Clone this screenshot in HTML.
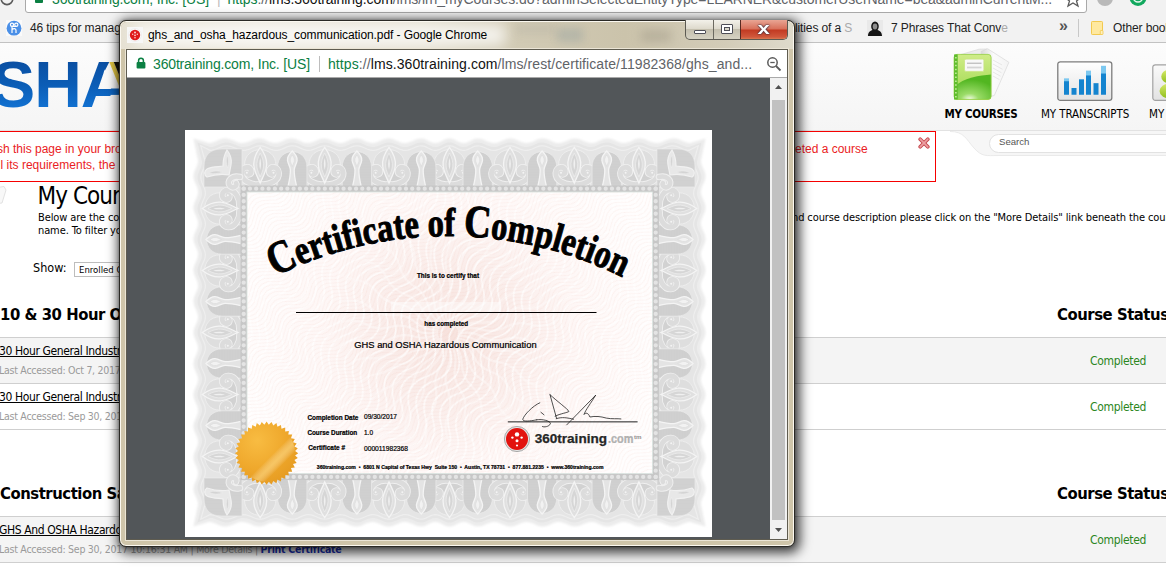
<!DOCTYPE html>
<html lang="en">
<head>
<meta charset="utf-8">
<title>ghs_and_osha_hazardous_communication.pdf - Google Chrome</title>
<style>
*{box-sizing:border-box;margin:0;padding:0}
html,body{width:1166px;height:575px;overflow:hidden;background:#fff}
body{position:relative;font-family:"DejaVu Sans Condensed","DejaVu Sans","Liberation Sans",sans-serif;color:#000}
.abs{position:absolute;white-space:nowrap}
.ui{font-family:"Liberation Sans",sans-serif}
/* ---------- background chrome ---------- */
#tb{left:0;top:0;width:1166px;height:13px;background:#f2f2f2}
#omni{left:25px;top:-18px;width:1062px;height:31px;background:#fff;border:1px solid #a9a9a9;border-radius:3px}
#bm{left:0;top:13px;width:1166px;height:30px;background:#f2f2f2;border-bottom:1px solid #c2c2c2}
.bmt{top:20px;font:12px/16px "Liberation Sans",sans-serif;color:#222;letter-spacing:-.12px}
/* ---------- LMS page ---------- */
#hdr{left:0;top:43px;width:1166px;height:88px;background:linear-gradient(#fcfcfc,#f5f5f5)}
.tah{font-family:"DejaVu Sans Condensed","DejaVu Sans",sans-serif}
.row{left:0;width:1166px;height:46px;border-top:1px solid #cfcfcf}
.lnk{left:-1px;font-size:12px;line-height:14px;letter-spacing:-.38px;text-decoration:underline;color:#000}
.la{left:-1px;font-size:10.5px;line-height:13px;letter-spacing:-.26px;color:#9a9a9a}
.cmp{left:1090px;font-size:12px;line-height:14px;letter-spacing:-.32px;color:#2b861d;margin-top:1px}
.sec{font-size:16.5px;line-height:20px;letter-spacing:-.45px;font-family:"DejaVu Sans Condensed","DejaVu Sans",sans-serif;font-weight:bold}
/* ---------- popup window ---------- */
#win{left:119px;top:20px;width:676px;height:527px;border-radius:7px;background:#cfc5aa;border:1px solid #2a2925;
 box-shadow:inset 0 0 0 1px #fbf8f0, 2px 3px 12px 3px rgba(0,0,0,.75), 0 0 3px 0 rgba(0,0,0,.3)}
#tbar{left:1px;top:1px;width:672px;height:27px;border-radius:6px 6px 0 0;overflow:hidden;background:linear-gradient(90deg,#e6e1d3 0,#ece8de 20%,#e4dfd0 45%,#d2cbb5 58%,#cbc3ab 75%,#d3ccb8 90%,#dedacb 100%)}
#inner{left:6px;top:28px;width:662px;height:491px;border:1px solid #5f5c50;box-shadow:0 0 0 1px #ebe5d6;background:#fff}
#addr{left:0;top:0;width:660px;height:28px;background:#fff;border-bottom:1px solid #a9a9a9}
#view{left:0;top:28px;width:660px;height:461px;background:#525659;overflow:hidden}
#sb{right:0;top:0;width:17px;height:461px;background:#f1f1f1}
#thumb{left:2px;top:22px;width:13px;height:420px;background:#c1c1c1}
#page{left:58px;top:52px;width:527px;height:407px;background:#fff;overflow:hidden}
.seg{font-family:"Liberation Sans",sans-serif}
</style>
</head>
<body>
<!-- background browser toolbar -->
<div id="tb" class="abs"></div>
<svg class="abs" style="left:0;top:0" width="16" height="8" viewBox="0 0 16 8"><circle cx="7" cy="-1.200" r="5.800" fill="none" stroke="#5a5a5a" stroke-width="1.600"/></svg>
<div id="omni" class="abs"></div>
<div class="abs" style="left:35px;top:-6px;width:8px;height:9px;background:#0b8043;border-radius:0 0 1px 1px"></div>
<div class="abs seg" id="otxt" style="left:52px;top:-10px;font-size:14px;line-height:18px;color:#5f6368;letter-spacing:-.075px"><span style="color:#0b8043;letter-spacing:-.16px">360training.com, Inc. [US]</span><span style="color:#bbb;padding:0 7px 0 8px">|</span><span style="color:#0b8043">https</span>://<span style="color:#111">lms.360training.com</span>/lms/lrn_myCourses.do?adminSelectedEntityType=LEARNER&amp;customerUserName=bea&amp;adminCurrentM...</div>
<svg class="abs" style="left:1062px;top:0" width="104" height="10" viewBox="-6 0 104 10"><path d="M8,-6 L10,0 L16,0.500 L11.500,4 L13,9 L8,6 L3,9 L4.500,4 L0,0.500 L6,0 Z" transform="translate(-3 -3)" fill="none" stroke="#5a5a5a" stroke-width="1.300"/><circle cx="37" cy="-2" r="8" fill="#b9b9b9"/><circle cx="70" cy="-2.500" r="8.500" fill="#12a85e"/><circle cx="70" cy="-2.500" r="4.500" fill="none" stroke="#e8f6ee" stroke-width="1.500"/><rect x="92" y="-3" width="3" height="3" fill="#666"/></svg>
<div id="bm" class="abs"></div>
<svg class="abs" style="left:6px;top:20px" width="16" height="16" viewBox="0 0 16 16"><rect width="16" height="16" fill="#fafafa"/><circle cx="8" cy="8.200" r="7.400" fill="#4a8fe7"/><g fill="none" stroke="#fff" stroke-width="1.200"><circle cx="6" cy="4.800" r="1.600"/><circle cx="10.300" cy="4.800" r="1.600"/><path d="M6,6.500V13M6,9.500c1.500,-1.300 4,-1.300 4,0.800V13M6,6.500L10.300,6.400"/></g></svg>
<div class="abs bmt" style="left:30px">46 tips for manag</div>
<div class="abs bmt" style="left:795px">lities of a <span style="color:#aaa">S</span></div>
<svg class="abs" style="left:867px;top:20px" width="16" height="16" viewBox="0 0 16 16"><rect width="16" height="16" fill="#e9e9e9"/><path d="M1,16C1,11.500 4,10.500 5.500,10C3.500,8 3.500,2 8,1.500C12.500,2 12.500,8 10.500,10C12,10.500 15,11.500 15,16Z" fill="#151515"/><ellipse cx="8" cy="6.500" rx="2.300" ry="2.900" fill="#8d8d8d"/></svg>
<div class="abs bmt" style="left:891px">7 Phrases That Conv<span style="color:#aaa">e</span></div>
<div class="abs bmt" style="left:1059px;top:18px;font-size:16px;font-weight:bold;color:#555">»</div>
<div class="abs" style="left:1078px;top:19px;width:1px;height:18px;background:#c8c8c8"></div>
<svg class="abs" style="left:1091px;top:21px" width="13" height="14" viewBox="0 0 13 14"><rect x=".5" y=".5" width="11" height="13" rx=".8" fill="#ffe9a0" stroke="#f2c94f" stroke-width="1"/><rect x="9.300" y="9.500" width="2.700" height="4" rx=".6" fill="#fff0bd" stroke="#f2c94f" stroke-width=".8"/></svg>
<div class="abs bmt" style="left:1113px">Other bookmarks</div>

<!-- LMS page -->
<div id="hdr" class="abs"></div>
<div class="abs" style="left:0;top:130px;width:1166px;height:1px;background:#e2e2e2"></div>
<!-- OSHA logo -->
<div class="abs ui" id="logo" style="left:-59.400px;top:48px;font-size:64px;line-height:74px;font-weight:bold;letter-spacing:-1px;transform:scaleX(1.03);transform-origin:0 0;background:linear-gradient(#0a4fa2 18%,#0b5db6 50%,#1272d2 82%);-webkit-background-clip:text;background-clip:text;color:transparent">OSHA</div>
<svg class="abs" style="left:0;top:43px" width="140" height="88" viewBox="0 43 140 88"><defs><linearGradient id="hg" gradientUnits="userSpaceOnUse" x1="0" y1="43" x2="0" y2="131"><stop offset="0" stop-color="#fcfcfc"/><stop offset="1" stop-color="#f5f5f5"/></linearGradient></defs><polygon points="110.300,60 123,60 123,88.600 103,88.600 104.200,72" fill="url(#hg)"/><polygon points="110.500,94.900 123,94.900 123,112 110.500,112" fill="url(#hg)"/><polygon points="109.300,62 113.800,62 132.500,108 128,108" fill="#e2c644"/><polygon points="113.800,62 120,62 138.700,108 132.500,108" fill="#14120c"/></svg>
<!-- nav icons -->
<svg class="abs" style="left:950px;top:46px" width="64" height="58" viewBox="0 0 64 58">
 <defs>
  <linearGradient id="gb" x1="0" y1="0" x2="0" y2="1"><stop offset="0" stop-color="#cfec88"/><stop offset="1" stop-color="#9dd74b"/></linearGradient>
  <radialGradient id="gb2" cx=".42" cy="1" r=".8"><stop offset="0" stop-color="#f6fdea"/><stop offset=".3" stop-color="#9bdc68"/><stop offset="1" stop-color="#52b621"/></radialGradient>
  <linearGradient id="gp" x1="0" y1="0" x2="1" y2="0"><stop offset="0" stop-color="#d9d9d9"/><stop offset=".45" stop-color="#fbfbfb"/><stop offset="1" stop-color="#f3f3f3"/></linearGradient>
 </defs>
 <polygon points="11,8.500 29,3.200 37,3 41,9" fill="#ececec" stroke="#d4d4d4" stroke-width=".6"/>
 <polygon points="31,5.500 37.500,2.700 58.900,16.300 44.300,49.500 40,50.500" fill="url(#gp)" stroke="#d8d8d8" stroke-width=".7"/>
 <path d="M43,14l9,5M43,18l9.500,5.300M43,22l8.500,4.800M43,26l7.500,4.200M43,30l6.500,3.700" stroke="#dadada" stroke-width=".6" fill="none"/>
 <rect x="4.100" y="8.400" width="37" height="45" rx="3" fill="url(#gb)"/>
 <path d="M4.100,41C14,31 30,29.500 41.100,28.500V50.400a3,3 0 0 1 -3,3H4.100Z" fill="url(#gb2)"/>
 <rect x="4.100" y="8.400" width="37" height="45" rx="3" fill="none" stroke="#93cf3f" stroke-width=".8"/>
 <rect x="4.100" y="8.400" width="3.600" height="45" fill="#5ebc2b"/>
 <path d="M5.900,11v42" stroke="#dbf6b6" stroke-width="1.300" stroke-dasharray="1.500 2.400" fill="none"/>
 <rect x="14.500" y="13.100" width="19.400" height="12.300" rx="1.500" fill="#f8f8f8" stroke="#c9e482" stroke-width=".8"/>
 <rect x="17" y="16.600" width="14.500" height="1.300" fill="#bdbdbd"/><rect x="17" y="20.600" width="14.500" height="1.800" fill="#d4d4d4"/>
</svg>
<div class="abs tah" style="left:944.500px;top:107px;font-size:11.5px;line-height:14px;font-weight:bold;letter-spacing:-.32px">MY COURSES</div>
<svg class="abs" style="left:1057px;top:60.500px" width="56" height="40.500" viewBox="0 0 56 42" preserveAspectRatio="none">
  <defs><linearGradient id="gc" x1="0" y1="0" x2="0" y2="1"><stop offset="0" stop-color="#ffffff"/><stop offset="1" stop-color="#e3e3e3"/></linearGradient></defs>
  <rect x=".8" y=".8" width="54" height="40" rx="2.5" fill="url(#gc)" stroke="#7d7d7d" stroke-width="1.3"/>
  <g fill="#1484cf">
    <rect x="7" y="20" width="5" height="15"/><rect x="14.500" y="28" width="5" height="7"/><rect x="22" y="19" width="5" height="16"/><rect x="29" y="14" width="5" height="21"/><rect x="36.500" y="23" width="5" height="12"/><rect x="44" y="10" width="5" height="25"/>
  </g>
  <g fill="#7cc8f0"><rect x="7" y="18" width="5" height="3"/><rect x="29" y="10" width="5" height="5"/><rect x="44" y="5" width="5" height="8"/></g>
</svg>
<div class="abs tah" style="left:1041px;top:107px;font-size:11.5px;line-height:14px;letter-spacing:-.1px">MY TRANSCRIPTS</div>
<svg class="abs" style="left:1152px;top:64px" width="20" height="38" viewBox="0 0 20 38">
  <defs><linearGradient id="gpn" x1="0" y1="0" x2="0" y2="1"><stop offset="0" stop-color="#d6ea6a"/><stop offset="1" stop-color="#8fbe1c"/></linearGradient><linearGradient id="gbx" x1="0" y1="0" x2="0" y2="1"><stop offset="0" stop-color="#fafafa"/><stop offset="1" stop-color="#e2e2e2"/></linearGradient></defs>
  <rect x=".8" y=".8" width="40" height="35.500" rx="2.500" fill="url(#gbx)" stroke="#a2a2a2" stroke-width="1.200"/>
  <circle cx="15.800" cy="12.500" r="6.500" fill="url(#gpn)"/><ellipse cx="18" cy="27" rx="10.500" ry="7.500" fill="url(#gpn)"/>
</svg>
<div class="abs tah" style="left:1149px;top:107px;font-size:11.5px;line-height:14px">MY PROFILE</div>
<!-- alert -->
<div class="abs" style="left:-20px;top:131px;width:956px;height:51px;border:1px solid #f60000;background:#fff"></div>
<div class="abs ui" style="left:-3px;top:142px;font-size:12px;line-height:15.5px;color:#ea1c24">sh this page in your browser<br><span style="margin-left:3.600px">l its requirements, the</span></div>
<div class="abs ui" style="left:795px;top:142px;font-size:12px;line-height:15.5px;color:#ea1c24">eted a course</div>
<svg class="abs" style="left:918px;top:137px" width="12" height="12" viewBox="0 0 12 12"><path d="M2.200 2.200L9.800 9.800M9.800 2.200L2.200 9.800" stroke="#c6494f" stroke-width="3.700" stroke-linecap="round"/><path d="M2.200 2.200L9.800 9.800M9.800 2.200L2.200 9.800" stroke="#eda0a3" stroke-width="1.700" stroke-linecap="round"/></svg>
<!-- search tab -->
<svg class="abs" style="left:950px;top:131px" width="216" height="28" viewBox="0 0 216 28">
  <path d="M0 .5C14 .5 16 8 24 17S36 24.500 48 24.500H216V0H0Z" fill="#f6f6f6"/>
  <path d="M0 .5C14 .5 16 8 24 17S36 24.500 48 24.500H216" fill="none" stroke="#eaeaea" stroke-width="1"/>
  <rect x="39.500" y="3.500" width="200" height="18" rx="9" fill="#fff" stroke="#e2e2e2"/>
</svg>
<div class="abs ui" style="left:999px;top:136px;font-size:9.600px;line-height:12px;color:#555">Search</div>
<!-- title -->
<svg class="abs" style="left:-6px;top:184px" width="20" height="24" viewBox="0 0 20 24"><polygon points="0,4 10,2.500 12,6 8,19 0,20" fill="#f8f8f8" stroke="#e2e2e2"/></svg>
<div class="abs tah" style="left:37.500px;top:181px;font-size:24px;line-height:30px;letter-spacing:-.95px">My Courses</div>
<div class="abs tah" id="d1" style="left:38px;top:211px;font-size:11px;line-height:13px;letter-spacing:-.11px">Below are the courses<br>name. To filter your</div>
<div class="abs tah" style="left:792px;top:211px;font-size:11px;line-height:13px;letter-spacing:-.11px"><span id="d2">nd course description please click on the "More Details" link beneath the </span>course</div>
<div class="abs tah" style="left:33px;top:260px;font-size:12.5px;line-height:16px">Show:</div>
<div class="abs tah" style="left:74px;top:262px;width:200px;height:15px;border:1px solid #bdbdbd;background:#fff;font-size:9.5px;line-height:13px;padding-left:4px">Enrolled Courses</div>
<!-- section 1 -->
<div class="abs sec" style="left:0;top:305px"><span id="s1">10 &amp; 30 Hour </span>Outreach</div>
<div class="abs sec" style="left:1057px;top:305px"><span id="s2">Course Statu</span>s</div>
<div class="abs row" style="top:337px;background:#f4f4f4"></div>
<div class="abs row" style="top:383px;background:#fff;border-bottom:1px solid #cfcfcf;height:47px"></div>
<div class="abs tah lnk" style="top:344px">30 Hour General Industry</div>
<div class="abs tah la" style="top:364px">Last Accessed: Oct 7, 2017</div>
<div class="abs tah cmp" style="top:353px">Completed</div>
<div class="abs tah lnk" style="top:390px">30 Hour General Industry</div>
<div class="abs tah la" style="top:410px">Last Accessed: Sep 30, 2017</div>
<div class="abs tah cmp" style="top:399px">Completed</div>
<!-- section 2 -->
<div class="abs sec" style="left:0;top:484px"><span id="s3">Construction </span>Safety</div>
<div class="abs sec" style="left:1057px;top:484px">Course Status</div>
<div class="abs row" style="top:516px;background:#f4f4f4;border-bottom:1px solid #cfcfcf;height:47px"></div>
<div class="abs tah lnk" style="top:523px">GHS And OSHA Hazardous Communication</div>
<div class="abs tah la" style="top:543px">Last Accessed: Sep 30, 2017 10:16:31 AM | More Details | <b style="color:#1a2fb0">Print Certificate</b></div>
<div class="abs tah cmp" style="top:532px">Completed</div>

<!-- popup window -->
<div id="win" class="abs">
  <!-- title bar -->
  <div id="tbar" class="abs"><div class="abs" style="left:14px;top:3px;width:370px;height:20px;background:rgba(255,255,255,.75);filter:blur(7px)"></div><div class="abs" style="left:436px;top:6px;width:26px;height:14px;background:rgba(120,140,150,.28);filter:blur(4px)"></div><div class="abs" style="left:395px;top:2px;width:40px;height:10px;background:rgba(150,150,150,.18);filter:blur(4px)"></div><div class="abs" style="left:520px;top:8px;width:30px;height:12px;background:rgba(110,105,90,.22);filter:blur(5px)"></div></div>
  <svg class="abs" style="left:7px;top:6px" width="16" height="16" viewBox="0 0 16 16"><rect width="16" height="16" fill="#f7f7f7"/><circle cx="8" cy="8" r="6.300" fill="#fff" stroke="#e2e2e2" stroke-width=".6"/><circle cx="8" cy="8" r="5.200" fill="#e01b1b"/><g fill="#fbd5d5"><circle cx="8" cy="5.600" r="1"/><circle cx="8" cy="8.300" r=".9"/><circle cx="8" cy="10.800" r=".8"/><circle cx="5.700" cy="7.200" r=".7"/><circle cx="10.300" cy="7.200" r=".7"/></g></svg>
  <div class="abs seg" id="ttl" style="left:28px;top:6px;font-size:12px;line-height:16px;color:#000;letter-spacing:-.09px">ghs_and_osha_hazardous_communication.pdf - Google Chrome</div>
  <!-- caption buttons -->
  <div class="abs" id="capb" style="left:565px;top:-1px;width:103px;height:20px;border:1px solid #5c5a52;border-top:none;border-radius:0 0 5px 5px;overflow:hidden;background:linear-gradient(#f3f1ea 0,#dedacd 45%,#c4bfae 50%,#d6d2c3 100%)">
    <div class="abs" style="left:27px;top:0;width:1px;height:20px;background:#6b6960"></div>
    <div class="abs" style="left:54px;top:0;width:48px;height:20px;border-left:1px solid #5a2a22;background:linear-gradient(#e9a594 0,#d8705a 45%,#c23a22 50%,#d0583c 85%,#e08a5c 100%)"></div>
    <div class="abs" style="left:8px;top:10px;width:12px;height:4px;border:1px solid #4e4e57;background:#fff;border-radius:1px"></div>
    <div class="abs" style="left:35px;top:4px;width:12px;height:10px;border:1px solid #4e4e57;background:#fff;border-radius:1px"><div class="abs" style="left:2px;top:2px;width:6px;height:4px;border:1px solid #4e4e57;background:#d9d6c9"></div></div>
    <div class="abs ui" style="left:73px;top:-1px;font-size:17px;line-height:20px;font-weight:bold;color:#fff;text-shadow:0 0 2px #3a2a3a,0 0 1px #3a2a3a,0 0 1px #3a2a3a;transform:scaleX(1.3)">x</div>
  </div>
  <div id="inner" class="abs">
  <div id="addr" class="abs">
    <svg class="abs" style="left:9px;top:7px" width="10" height="12" viewBox="0 0 10 12"><path d="M2.600 5.500V3.600a2.400 2.400 0 0 1 4.800 0V5.500" fill="none" stroke="#0b8043" stroke-width="1.500"/><rect x=".6" y="5" width="8.800" height="6.600" rx="1" fill="#0b8043"/></svg>
    <div class="abs seg" id="ev" style="left:26px;top:5px;font-size:14px;line-height:18px;color:#0b8043;letter-spacing:-.16px">360training.com, Inc. [US]</div>
    <div class="abs" style="left:192px;top:6px;width:1px;height:16px;background:#bdbdbd"></div>
    <div class="abs seg" id="url" style="left:201px;top:5px;font-size:14px;line-height:18px;color:#5f6368;letter-spacing:.085px"><span style="color:#0b8043">https</span>://<span style="color:#111">lms.360training.com</span>/lms/rest/certificate/11982368/ghs_and...</div>
    <svg class="abs" style="left:639px;top:6px" width="16" height="16" viewBox="0 0 16 16"><circle cx="6.500" cy="6.500" r="4.700" fill="none" stroke="#5a5a5a" stroke-width="1.500"/><path d="M10 10l4.500 4.500" stroke="#5a5a5a" stroke-width="1.800"/><path d="M4.300 6.500h4.400" stroke="#5a5a5a" stroke-width="1.300"/></svg>
  </div>
  <div id="view" class="abs">
    <div id="page" class="abs">
<svg class="abs" id="cert" style="left:0;top:0" width="527" height="407" viewBox="0 0 527 407">
<defs>
<filter id="bl1" x="-5%" y="-5%" width="110%" height="110%"><feGaussianBlur stdDeviation="1.2"/></filter>
<filter id="bl2"><feGaussianBlur stdDeviation=".5"/></filter>
<pattern id="hat" width="1.6" height="1.6" patternUnits="userSpaceOnUse"><path d="M0,.8H1.600" stroke="#c4c4c4" stroke-width=".5"/></pattern>
<g id="fl"><path d="M-15.700,46V24C-15.700,3.500 15.700,3.500 15.700,24V46Z" fill="#dedede" stroke="#eeeeee" stroke-width=".9"/><path d="M-15.700,46V31C-9,22 9,22 15.700,31V46Z" fill="#d4d4d4"/><path d="M-15.700,46V31C-9,22 9,22 15.700,31V46Z" fill="url(#hat)" opacity=".5"/><path d="M2,43.500C9,44 19,40 18.500,32C18,25 9.500,24.500 9,30C8.800,33.500 12.500,34.500 13.500,32" fill="none" stroke="#f0f0f0" stroke-width="6.600" stroke-linecap="round"/><path d="M-2,43.500C-9,44 -19,40 -18.500,32C-18,25 -9.500,24.500 -9,30C-8.800,33.500 -12.500,34.500 -13.500,32" fill="none" stroke="#f0f0f0" stroke-width="6.600" stroke-linecap="round"/><path d="M2,43.500C9,44 19,40 18.500,32C18,25 9.500,24.500 9,30C8.800,33.500 12.500,34.500 13.500,32" fill="none" stroke="#dcdcdc" stroke-width="4.800" stroke-linecap="round"/><path d="M-2,43.500C-9,44 -19,40 -18.500,32C-18,25 -9.500,24.500 -9,30C-8.800,33.500 -12.500,34.500 -13.500,32" fill="none" stroke="#dcdcdc" stroke-width="4.800" stroke-linecap="round"/><circle cx="13.300" cy="31.800" r="1" fill="#f4f4f4"/><circle cx="-13.300" cy="31.800" r="1" fill="#f4f4f4"/><path d="M0,6.300C5,13 7,19 6.300,25C5.500,32 2,37 0,42C-2,37 -5.500,32 -6.300,25C-7,19 -5,13 0,6.300Z" fill="#e0e0e0" stroke="#f4f4f4" stroke-width="1.300"/><path d="M0,12C2.500,17 3.800,21 3.300,26C2.800,30 1,33 0,36C-1,33 -2.800,30 -3.300,26C-3.800,21 -2.500,17 0,12Z" fill="#d6d6d6" stroke="#ececec" stroke-width=".8"/><path d="M0,17C1,21 1.300,24 0,29C-1.300,24 -1,21 0,17Z" fill="#f0f0f0"/></g>
<g id="td"><path d="M-14.600,46V26C-14.600,5.500 14.600,5.500 14.600,26V46Z" fill="#d2d2d2" stroke="#eaeaea" stroke-width=".9"/><path d="M-14.600,46V26C-14.600,5.500 14.600,5.500 14.600,26V46Z" fill="url(#hat)" opacity=".55"/><path d="M0,10C3.500,13.500 5.300,16.500 4.800,19.500C4.300,23 2,25.500 1.900,29C1.800,34 2.800,39 4.200,45L-4.200,45C-2.800,39 -1.800,34 -1.900,29C-2,25.500 -4.300,23 -4.800,19.500C-5.300,16.500 -3.500,13.500 0,10Z" fill="#e4e4e4" stroke="#f4f4f4" stroke-width="1.300"/><path d="M0,14C1.800,16.500 2.400,18.500 1.900,20.500C1.400,22.500 .5,23.500 0,25.500C-.5,23.500 -1.400,22.500 -1.900,20.500C-2.400,18.500 -1.800,16.500 0,14Z" fill="#f2f2f2" stroke="#d8d8d8" stroke-width=".5"/></g>
<pattern id="wv1" width="46" height="4.2" patternUnits="userSpaceOnUse" patternTransform="rotate(-38)"><path d="M0,-10.5 q11.5,-11 23,0 t23,0" fill="none" stroke="#f0bdb3" stroke-width=".5" opacity=".32"/><path d="M0,-6.3 q11.5,-11 23,0 t23,0" fill="none" stroke="#f0bdb3" stroke-width=".5" opacity=".32"/><path d="M0,-2.1 q11.5,-11 23,0 t23,0" fill="none" stroke="#f0bdb3" stroke-width=".5" opacity=".32"/><path d="M0,2.1 q11.5,-11 23,0 t23,0" fill="none" stroke="#f0bdb3" stroke-width=".5" opacity=".32"/><path d="M0,6.3 q11.5,-11 23,0 t23,0" fill="none" stroke="#f0bdb3" stroke-width=".5" opacity=".32"/><path d="M0,10.5 q11.5,-11 23,0 t23,0" fill="none" stroke="#f0bdb3" stroke-width=".5" opacity=".32"/><path d="M0,14.7 q11.5,-11 23,0 t23,0" fill="none" stroke="#f0bdb3" stroke-width=".5" opacity=".32"/></pattern>
<pattern id="wv2" width="70" height="9" patternUnits="userSpaceOnUse" patternTransform="rotate(-62)"><path d="M0,-22.5 q17.5,-16 35,0 t35,0" fill="none" stroke="#ffffff" stroke-width="1.6" opacity=".75"/><path d="M0,-13.5 q17.5,-16 35,0 t35,0" fill="none" stroke="#ffffff" stroke-width="1.6" opacity=".75"/><path d="M0,-4.5 q17.5,-16 35,0 t35,0" fill="none" stroke="#ffffff" stroke-width="1.6" opacity=".75"/><path d="M0,4.5 q17.5,-16 35,0 t35,0" fill="none" stroke="#ffffff" stroke-width="1.6" opacity=".75"/><path d="M0,13.5 q17.5,-16 35,0 t35,0" fill="none" stroke="#ffffff" stroke-width="1.6" opacity=".75"/><path d="M0,22.5 q17.5,-16 35,0 t35,0" fill="none" stroke="#ffffff" stroke-width="1.6" opacity=".75"/><path d="M0,31.5 q17.5,-16 35,0 t35,0" fill="none" stroke="#ffffff" stroke-width="1.6" opacity=".75"/></pattern>
<radialGradient id="pk" gradientUnits="userSpaceOnUse" cx="263" cy="203" r="215"><stop offset="0" stop-color="#f7e2dd"/><stop offset=".3" stop-color="#faece9"/><stop offset=".6" stop-color="#fef7f6"/><stop offset="1" stop-color="#fffdfd"/></radialGradient><radialGradient id="rayfade" gradientUnits="userSpaceOnUse" cx="0" cy="0" r="135"><stop offset="0" stop-color="#fff" stop-opacity=".4"/><stop offset=".7" stop-color="#fff" stop-opacity=".3"/><stop offset="1" stop-color="#fff" stop-opacity="0"/></radialGradient>
<pattern id="bead" width="6.2" height="6.2" patternUnits="userSpaceOnUse" x="55.5" y="55.5"><rect width="6.2" height="6.2" fill="#c6c6c6"/><circle cx="3.100" cy="3.100" r="2.200" fill="#e9e9e9"/><circle cx="3.100" cy="3.100" r=".9" fill="#d6d6d6"/></pattern>
<radialGradient id="gold" cx=".35" cy=".3" r=".9"><stop offset="0" stop-color="#f8bc42"/><stop offset=".5" stop-color="#efa82c"/><stop offset="1" stop-color="#e0941c"/></radialGradient>
<linearGradient id="shine" x1="0" y1="0" x2="1" y2="1"><stop offset="0" stop-color="#fff" stop-opacity="0"/><stop offset=".56" stop-color="#fff" stop-opacity="0"/><stop offset=".65" stop-color="#ffe39a" stop-opacity=".5"/><stop offset=".74" stop-color="#fff" stop-opacity="0"/><stop offset="1" stop-color="#fff" stop-opacity="0"/></linearGradient>
</defs>
<path d="M10,10 25,14.6 27.2,14.4 29.5,13.8 31.7,13 34,12 36.2,11.1 38.5,10.4 40.7,10 43,10.1 45.2,10.5 47.5,11.2 49.7,12.1 52,13.1 54.2,13.9 56.5,14.4 58.7,14.6 61,14.3 63.2,13.7 65.5,12.9 67.7,11.9 70,11 72.2,10.3 74.5,10 76.7,10.1 79,10.6 81.2,11.4 83.5,12.4 85.7,13.4 87.9,14.1 90.2,14.6 92.4,14.5 94.7,14.1 96.9,13.3 99.2,12.3 101.4,11.3 103.7,10.5 105.9,10.1 108.2,10 110.4,10.4 112.7,11.1 114.9,12.1 117.2,13.1 119.4,13.9 121.7,14.5 123.9,14.6 126.2,14.3 128.4,13.6 130.7,12.7 132.9,11.7 135.2,10.8 137.4,10.2 139.7,10 141.9,10.2 144.2,10.8 146.4,11.7 148.7,12.7 150.9,13.6 153.2,14.3 155.4,14.6 157.7,14.4 159.9,13.9 162.2,13 164.4,12 166.7,11.1 168.9,10.4 171.2,10 173.4,10.1 175.7,10.6 177.9,11.4 180.2,12.4 182.4,13.4 184.7,14.1 186.9,14.6 189.2,14.5 191.4,14.1 193.7,13.3 195.9,12.3 198.2,11.3 200.4,10.5 202.7,10.1 204.9,10 207.1,10.4 209.4,11.2 211.6,12.1 213.9,13.1 216.1,13.9 218.4,14.5 220.6,14.6 222.9,14.3 225.1,13.6 227.4,12.7 229.6,11.7 231.9,10.8 234.1,10.2 236.4,10 238.6,10.3 240.9,11.1 243.1,12.2 245.4,13.3 247.6,14.2 249.9,14.6 252.1,14.4 254.4,13.8 256.6,12.7 258.9,11.6 261.1,10.6 263.4,10.1 265.6,10.1 267.9,10.6 270.1,11.6 272.4,12.7 274.6,13.8 276.9,14.4 279.1,14.6 281.4,14.2 283.6,13.3 285.9,12.2 288.1,11.1 290.4,10.3 292.6,10 294.9,10.2 297.1,10.8 299.4,11.7 301.6,12.7 303.9,13.6 306.1,14.3 308.4,14.6 310.6,14.5 312.9,13.9 315.1,13.1 317.4,12.1 319.6,11.2 321.9,10.4 324.1,10 326.3,10.1 328.6,10.5 330.8,11.3 333.1,12.3 335.3,13.3 337.6,14.1 339.8,14.5 342.1,14.6 344.3,14.1 346.6,13.4 348.8,12.4 351.1,11.4 353.3,10.6 355.6,10.1 357.8,10 360.1,10.4 362.3,11.1 364.6,12 366.8,13 369.1,13.9 371.3,14.4 373.6,14.6 375.8,14.3 378.1,13.6 380.3,12.7 382.6,11.7 384.8,10.8 387.1,10.2 389.3,10 391.6,10.2 393.8,10.8 396.1,11.7 398.3,12.7 400.6,13.6 402.8,14.3 405.1,14.6 407.3,14.5 409.6,13.9 411.8,13.1 414.1,12.1 416.3,11.1 418.6,10.4 420.8,10 423.1,10.1 425.3,10.5 427.6,11.3 429.8,12.3 432.1,13.3 434.3,14.1 436.6,14.5 438.8,14.6 441.1,14.1 443.3,13.4 445.5,12.4 447.8,11.4 450,10.6 452.3,10.1 454.5,10 456.8,10.3 459,11 461.3,11.9 463.5,12.9 465.8,13.7 468,14.3 470.3,14.6 472.5,14.4 474.8,13.9 477,13.1 479.3,12.1 481.5,11.2 483.8,10.5 486,10.1 488.3,10 490.5,10.4 492.8,11.1 495,12 497.3,13 499.5,13.8 501.8,14.4 504,14.6 519,10 514.4,32 514.6,34.2 515.3,36.5 516.2,38.7 517.3,41 518.2,43.2 518.8,45.5 519,47.7 518.7,49.9 518,52.2 517.1,54.4 516,56.7 515.1,58.9 514.6,61.2 514.4,63.4 514.7,65.7 515.4,67.9 516.4,70.1 517.4,72.4 518.3,74.6 518.9,76.9 519,79.1 518.6,81.4 517.9,83.6 516.9,85.8 515.9,88.1 515,90.3 514.5,92.6 514.4,94.8 514.8,97.1 515.6,99.3 516.6,101.5 517.6,103.8 518.5,106 518.9,108.3 519,110.5 518.5,112.8 517.7,115 516.7,117.2 515.7,119.5 514.9,121.7 514.4,124 514.5,126.2 514.9,128.5 515.8,130.7 516.8,133 517.8,135.2 518.6,137.4 519,139.7 518.9,141.9 518.4,144.2 517.5,146.4 516.5,148.7 515.5,150.9 514.8,153.1 514.4,155.4 514.5,157.6 515.1,159.9 516,162.1 517,164.4 518,166.6 518.7,168.8 519,171.1 518.8,173.3 518.3,175.6 517.4,177.8 516.3,180.1 515.4,182.3 514.7,184.6 514.4,186.8 514.6,189 515.2,191.3 516.1,193.5 517.2,195.8 518.1,198 518.8,200.3 519,202.5 518.8,204.7 518.1,207 517.2,209.2 516.1,211.5 515.2,213.7 514.6,216 514.4,218.2 514.7,220.4 515.4,222.7 516.3,224.9 517.4,227.2 518.3,229.4 518.8,231.7 519,233.9 518.7,236.2 518,238.4 517,240.6 516,242.9 515.1,245.1 514.5,247.4 514.4,249.6 514.8,251.9 515.5,254.1 516.5,256.3 517.5,258.6 518.4,260.8 518.9,263.1 519,265.3 518.6,267.6 517.8,269.8 516.8,272 515.8,274.3 514.9,276.5 514.5,278.8 514.4,281 514.9,283.3 515.7,285.5 516.7,287.8 517.7,290 518.5,292.2 519,294.5 518.9,296.7 518.5,299 517.6,301.2 516.6,303.5 515.6,305.7 514.8,307.9 514.4,310.2 514.5,312.4 515,314.7 515.9,316.9 516.9,319.2 517.9,321.4 518.6,323.6 519,325.9 518.9,328.1 518.3,330.4 517.4,332.6 516.4,334.9 515.4,337.1 514.7,339.3 514.4,341.6 514.6,343.8 515.1,346.1 516,348.3 517.1,350.6 518,352.8 518.7,355.1 519,357.3 518.8,359.5 518.2,361.8 517.3,364 516.2,366.3 515.3,368.5 514.6,370.8 514.4,373 519,395 504,390.4 501.8,390.6 499.5,391.2 497.3,392 495,393 492.8,393.9 490.5,394.6 488.3,395 486,394.9 483.8,394.5 481.5,393.8 479.3,392.9 477,391.9 474.8,391.1 472.5,390.6 470.3,390.4 468,390.7 465.8,391.3 463.5,392.1 461.3,393.1 459,394 456.8,394.7 454.5,395 452.3,394.9 450,394.4 447.8,393.6 445.5,392.6 443.3,391.6 441.1,390.9 438.8,390.4 436.6,390.5 434.3,390.9 432.1,391.7 429.8,392.7 427.6,393.7 425.3,394.5 423.1,394.9 420.8,395 418.6,394.6 416.3,393.9 414.1,392.9 411.8,391.9 409.6,391.1 407.3,390.5 405.1,390.4 402.8,390.7 400.6,391.4 398.3,392.3 396.1,393.3 393.8,394.2 391.6,394.8 389.3,395 387.1,394.8 384.8,394.2 382.6,393.3 380.3,392.3 378.1,391.4 375.8,390.7 373.6,390.4 371.3,390.6 369.1,391.1 366.8,392 364.6,393 362.3,393.9 360.1,394.6 357.8,395 355.6,394.9 353.3,394.4 351.1,393.6 348.8,392.6 346.6,391.6 344.3,390.9 342.1,390.4 339.8,390.5 337.6,390.9 335.3,391.7 333.1,392.7 330.8,393.7 328.6,394.5 326.3,394.9 324.1,395 321.9,394.6 319.6,393.8 317.4,392.9 315.1,391.9 312.9,391.1 310.6,390.5 308.4,390.4 306.1,390.7 303.9,391.4 301.6,392.3 299.4,393.3 297.1,394.2 294.9,394.8 292.6,395 290.4,394.7 288.1,393.9 285.9,392.8 283.6,391.7 281.4,390.8 279.1,390.4 276.9,390.6 274.6,391.2 272.4,392.3 270.1,393.4 267.9,394.4 265.6,394.9 263.4,394.9 261.1,394.4 258.9,393.4 256.6,392.3 254.4,391.2 252.1,390.6 249.9,390.4 247.6,390.8 245.4,391.7 243.1,392.8 240.9,393.9 238.6,394.7 236.4,395 234.1,394.8 231.9,394.2 229.6,393.3 227.4,392.3 225.1,391.4 222.9,390.7 220.6,390.4 218.4,390.5 216.1,391.1 213.9,391.9 211.6,392.9 209.4,393.8 207.1,394.6 204.9,395 202.7,394.9 200.4,394.5 198.2,393.7 195.9,392.7 193.7,391.7 191.4,390.9 189.2,390.5 186.9,390.4 184.7,390.9 182.4,391.6 180.2,392.6 177.9,393.6 175.7,394.4 173.4,394.9 171.2,395 168.9,394.6 166.7,393.9 164.4,393 162.2,392 159.9,391.1 157.7,390.6 155.4,390.4 153.2,390.7 150.9,391.4 148.7,392.3 146.4,393.3 144.2,394.2 141.9,394.8 139.7,395 137.4,394.8 135.2,394.2 132.9,393.3 130.7,392.3 128.4,391.4 126.2,390.7 123.9,390.4 121.7,390.5 119.4,391.1 117.2,391.9 114.9,392.9 112.7,393.9 110.4,394.6 108.2,395 105.9,394.9 103.7,394.5 101.4,393.7 99.2,392.7 96.9,391.7 94.7,390.9 92.4,390.5 90.2,390.4 87.9,390.9 85.7,391.6 83.5,392.6 81.2,393.6 79,394.4 76.7,394.9 74.5,395 72.2,394.7 70,394 67.7,393.1 65.5,392.1 63.2,391.3 61,390.7 58.7,390.4 56.5,390.6 54.2,391.1 52,391.9 49.7,392.9 47.5,393.8 45.2,394.5 43,394.9 40.7,395 38.5,394.6 36.2,393.9 34,393 31.7,392 29.5,391.2 27.2,390.6 25,390.4 10,395 14.6,373 14.4,370.8 13.7,368.5 12.8,366.3 11.7,364 10.8,361.8 10.2,359.5 10,357.3 10.3,355.1 11,352.8 11.9,350.6 13,348.3 13.9,346.1 14.4,343.8 14.6,341.6 14.3,339.3 13.6,337.1 12.6,334.9 11.6,332.6 10.7,330.4 10.1,328.1 10,325.9 10.4,323.6 11.1,321.4 12.1,319.2 13.1,316.9 14,314.7 14.5,312.4 14.6,310.2 14.2,307.9 13.4,305.7 12.4,303.5 11.4,301.2 10.5,299 10.1,296.7 10,294.5 10.5,292.2 11.3,290 12.3,287.8 13.3,285.5 14.1,283.3 14.6,281 14.5,278.8 14.1,276.5 13.2,274.3 12.2,272 11.2,269.8 10.4,267.6 10,265.3 10.1,263.1 10.6,260.8 11.5,258.6 12.5,256.3 13.5,254.1 14.2,251.9 14.6,249.6 14.5,247.4 13.9,245.1 13,242.9 12,240.6 11,238.4 10.3,236.2 10,233.9 10.2,231.7 10.7,229.4 11.6,227.2 12.7,224.9 13.6,222.7 14.3,220.4 14.6,218.2 14.4,216 13.8,213.7 12.9,211.5 11.8,209.2 10.9,207 10.2,204.7 10,202.5 10.2,200.3 10.9,198 11.8,195.8 12.9,193.5 13.8,191.3 14.4,189 14.6,186.8 14.3,184.6 13.6,182.3 12.7,180.1 11.6,177.8 10.7,175.6 10.2,173.3 10,171.1 10.3,168.8 11,166.6 12,164.4 13,162.1 13.9,159.9 14.5,157.6 14.6,155.4 14.2,153.1 13.5,150.9 12.5,148.7 11.5,146.4 10.6,144.2 10.1,141.9 10,139.7 10.4,137.4 11.2,135.2 12.2,133 13.2,130.7 14.1,128.5 14.5,126.2 14.6,124 14.1,121.7 13.3,119.5 12.3,117.2 11.3,115 10.5,112.8 10,110.5 10.1,108.3 10.5,106 11.4,103.8 12.4,101.5 13.4,99.3 14.2,97.1 14.6,94.8 14.5,92.6 14,90.3 13.1,88.1 12.1,85.8 11.1,83.6 10.4,81.4 10,79.1 10.1,76.9 10.7,74.6 11.6,72.4 12.6,70.1 13.6,67.9 14.3,65.7 14.6,63.4 14.4,61.2 13.9,58.9 13,56.7 11.9,54.4 11,52.2 10.3,49.9 10,47.7 10.2,45.5 10.8,43.2 11.7,41 12.8,38.7 13.7,36.5 14.4,34.2 14.6,32Z" fill="#ececec" filter="url(#bl1)" transform="translate(264.500 202.500) scale(1.006 1.008) translate(-264.500 -202.500)"/>
<path d="M12.5,12.5 25,17.1 27.2,16.9 29.5,16.3 31.7,15.5 34,14.5 36.2,13.6 38.5,12.9 40.7,12.5 43,12.6 45.2,13 47.5,13.7 49.7,14.6 52,15.6 54.2,16.4 56.5,16.9 58.7,17.1 61,16.8 63.2,16.2 65.5,15.4 67.7,14.4 70,13.5 72.2,12.8 74.5,12.5 76.7,12.6 79,13.1 81.2,13.9 83.5,14.9 85.7,15.9 87.9,16.6 90.2,17.1 92.4,17 94.7,16.6 96.9,15.8 99.2,14.8 101.4,13.8 103.7,13 105.9,12.6 108.2,12.5 110.4,12.9 112.7,13.6 114.9,14.6 117.2,15.6 119.4,16.4 121.7,17 123.9,17.1 126.2,16.8 128.4,16.1 130.7,15.2 132.9,14.2 135.2,13.3 137.4,12.7 139.7,12.5 141.9,12.7 144.2,13.3 146.4,14.2 148.7,15.2 150.9,16.1 153.2,16.8 155.4,17.1 157.7,16.9 159.9,16.4 162.2,15.5 164.4,14.5 166.7,13.6 168.9,12.9 171.2,12.5 173.4,12.6 175.7,13.1 177.9,13.9 180.2,14.9 182.4,15.9 184.7,16.6 186.9,17.1 189.2,17 191.4,16.6 193.7,15.8 195.9,14.8 198.2,13.8 200.4,13 202.7,12.6 204.9,12.5 207.1,12.9 209.4,13.7 211.6,14.6 213.9,15.6 216.1,16.4 218.4,17 220.6,17.1 222.9,16.8 225.1,16.1 227.4,15.2 229.6,14.2 231.9,13.3 234.1,12.7 236.4,12.5 238.6,12.8 240.9,13.6 243.1,14.7 245.4,15.8 247.6,16.7 249.9,17.1 252.1,16.9 254.4,16.3 256.6,15.2 258.9,14.1 261.1,13.1 263.4,12.6 265.6,12.6 267.9,13.1 270.1,14.1 272.4,15.2 274.6,16.3 276.9,16.9 279.1,17.1 281.4,16.7 283.6,15.8 285.9,14.7 288.1,13.6 290.4,12.8 292.6,12.5 294.9,12.7 297.1,13.3 299.4,14.2 301.6,15.2 303.9,16.1 306.1,16.8 308.4,17.1 310.6,17 312.9,16.4 315.1,15.6 317.4,14.6 319.6,13.7 321.9,12.9 324.1,12.5 326.3,12.6 328.6,13 330.8,13.8 333.1,14.8 335.3,15.8 337.6,16.6 339.8,17 342.1,17.1 344.3,16.6 346.6,15.9 348.8,14.9 351.1,13.9 353.3,13.1 355.6,12.6 357.8,12.5 360.1,12.9 362.3,13.6 364.6,14.5 366.8,15.5 369.1,16.4 371.3,16.9 373.6,17.1 375.8,16.8 378.1,16.1 380.3,15.2 382.6,14.2 384.8,13.3 387.1,12.7 389.3,12.5 391.6,12.7 393.8,13.3 396.1,14.2 398.3,15.2 400.6,16.1 402.8,16.8 405.1,17.1 407.3,17 409.6,16.4 411.8,15.6 414.1,14.6 416.3,13.6 418.6,12.9 420.8,12.5 423.1,12.6 425.3,13 427.6,13.8 429.8,14.8 432.1,15.8 434.3,16.6 436.6,17 438.8,17.1 441.1,16.6 443.3,15.9 445.5,14.9 447.8,13.9 450,13.1 452.3,12.6 454.5,12.5 456.8,12.8 459,13.5 461.3,14.4 463.5,15.4 465.8,16.2 468,16.8 470.3,17.1 472.5,16.9 474.8,16.4 477,15.6 479.3,14.6 481.5,13.7 483.8,13 486,12.6 488.3,12.5 490.5,12.9 492.8,13.6 495,14.5 497.3,15.5 499.5,16.3 501.8,16.9 504,17.1 516.5,12.5 511.9,32 512.1,34.2 512.8,36.5 513.7,38.7 514.8,41 515.7,43.2 516.3,45.5 516.5,47.7 516.2,49.9 515.5,52.2 514.6,54.4 513.5,56.7 512.6,58.9 512.1,61.2 511.9,63.4 512.2,65.7 512.9,67.9 513.9,70.1 514.9,72.4 515.8,74.6 516.4,76.9 516.5,79.1 516.1,81.4 515.4,83.6 514.4,85.8 513.4,88.1 512.5,90.3 512,92.6 511.9,94.8 512.3,97.1 513.1,99.3 514.1,101.5 515.1,103.8 516,106 516.4,108.3 516.5,110.5 516,112.8 515.2,115 514.2,117.2 513.2,119.5 512.4,121.7 511.9,124 512,126.2 512.4,128.5 513.3,130.7 514.3,133 515.3,135.2 516.1,137.4 516.5,139.7 516.4,141.9 515.9,144.2 515,146.4 514,148.7 513,150.9 512.3,153.1 511.9,155.4 512,157.6 512.6,159.9 513.5,162.1 514.5,164.4 515.5,166.6 516.2,168.8 516.5,171.1 516.3,173.3 515.8,175.6 514.9,177.8 513.8,180.1 512.9,182.3 512.2,184.6 511.9,186.8 512.1,189 512.7,191.3 513.6,193.5 514.7,195.8 515.6,198 516.3,200.3 516.5,202.5 516.3,204.7 515.6,207 514.7,209.2 513.6,211.5 512.7,213.7 512.1,216 511.9,218.2 512.2,220.4 512.9,222.7 513.8,224.9 514.9,227.2 515.8,229.4 516.3,231.7 516.5,233.9 516.2,236.2 515.5,238.4 514.5,240.6 513.5,242.9 512.6,245.1 512,247.4 511.9,249.6 512.3,251.9 513,254.1 514,256.3 515,258.6 515.9,260.8 516.4,263.1 516.5,265.3 516.1,267.6 515.3,269.8 514.3,272 513.3,274.3 512.4,276.5 512,278.8 511.9,281 512.4,283.3 513.2,285.5 514.2,287.8 515.2,290 516,292.2 516.5,294.5 516.4,296.7 516,299 515.1,301.2 514.1,303.5 513.1,305.7 512.3,307.9 511.9,310.2 512,312.4 512.5,314.7 513.4,316.9 514.4,319.2 515.4,321.4 516.1,323.6 516.5,325.9 516.4,328.1 515.8,330.4 514.9,332.6 513.9,334.9 512.9,337.1 512.2,339.3 511.9,341.6 512.1,343.8 512.6,346.1 513.5,348.3 514.6,350.6 515.5,352.8 516.2,355.1 516.5,357.3 516.3,359.5 515.7,361.8 514.8,364 513.7,366.3 512.8,368.5 512.1,370.8 511.9,373 516.5,392.5 504,387.9 501.8,388.1 499.5,388.7 497.3,389.5 495,390.5 492.8,391.4 490.5,392.1 488.3,392.5 486,392.4 483.8,392 481.5,391.3 479.3,390.4 477,389.4 474.8,388.6 472.5,388.1 470.3,387.9 468,388.2 465.8,388.8 463.5,389.6 461.3,390.6 459,391.5 456.8,392.2 454.5,392.5 452.3,392.4 450,391.9 447.8,391.1 445.5,390.1 443.3,389.1 441.1,388.4 438.8,387.9 436.6,388 434.3,388.4 432.1,389.2 429.8,390.2 427.6,391.2 425.3,392 423.1,392.4 420.8,392.5 418.6,392.1 416.3,391.4 414.1,390.4 411.8,389.4 409.6,388.6 407.3,388 405.1,387.9 402.8,388.2 400.6,388.9 398.3,389.8 396.1,390.8 393.8,391.7 391.6,392.3 389.3,392.5 387.1,392.3 384.8,391.7 382.6,390.8 380.3,389.8 378.1,388.9 375.8,388.2 373.6,387.9 371.3,388.1 369.1,388.6 366.8,389.5 364.6,390.5 362.3,391.4 360.1,392.1 357.8,392.5 355.6,392.4 353.3,391.9 351.1,391.1 348.8,390.1 346.6,389.1 344.3,388.4 342.1,387.9 339.8,388 337.6,388.4 335.3,389.2 333.1,390.2 330.8,391.2 328.6,392 326.3,392.4 324.1,392.5 321.9,392.1 319.6,391.3 317.4,390.4 315.1,389.4 312.9,388.6 310.6,388 308.4,387.9 306.1,388.2 303.9,388.9 301.6,389.8 299.4,390.8 297.1,391.7 294.9,392.3 292.6,392.5 290.4,392.2 288.1,391.4 285.9,390.3 283.6,389.2 281.4,388.3 279.1,387.9 276.9,388.1 274.6,388.7 272.4,389.8 270.1,390.9 267.9,391.9 265.6,392.4 263.4,392.4 261.1,391.9 258.9,390.9 256.6,389.8 254.4,388.7 252.1,388.1 249.9,387.9 247.6,388.3 245.4,389.2 243.1,390.3 240.9,391.4 238.6,392.2 236.4,392.5 234.1,392.3 231.9,391.7 229.6,390.8 227.4,389.8 225.1,388.9 222.9,388.2 220.6,387.9 218.4,388 216.1,388.6 213.9,389.4 211.6,390.4 209.4,391.3 207.1,392.1 204.9,392.5 202.7,392.4 200.4,392 198.2,391.2 195.9,390.2 193.7,389.2 191.4,388.4 189.2,388 186.9,387.9 184.7,388.4 182.4,389.1 180.2,390.1 177.9,391.1 175.7,391.9 173.4,392.4 171.2,392.5 168.9,392.1 166.7,391.4 164.4,390.5 162.2,389.5 159.9,388.6 157.7,388.1 155.4,387.9 153.2,388.2 150.9,388.9 148.7,389.8 146.4,390.8 144.2,391.7 141.9,392.3 139.7,392.5 137.4,392.3 135.2,391.7 132.9,390.8 130.7,389.8 128.4,388.9 126.2,388.2 123.9,387.9 121.7,388 119.4,388.6 117.2,389.4 114.9,390.4 112.7,391.4 110.4,392.1 108.2,392.5 105.9,392.4 103.7,392 101.4,391.2 99.2,390.2 96.9,389.2 94.7,388.4 92.4,388 90.2,387.9 87.9,388.4 85.7,389.1 83.5,390.1 81.2,391.1 79,391.9 76.7,392.4 74.5,392.5 72.2,392.2 70,391.5 67.7,390.6 65.5,389.6 63.2,388.8 61,388.2 58.7,387.9 56.5,388.1 54.2,388.6 52,389.4 49.7,390.4 47.5,391.3 45.2,392 43,392.4 40.7,392.5 38.5,392.1 36.2,391.4 34,390.5 31.7,389.5 29.5,388.7 27.2,388.1 25,387.9 12.5,392.5 17.1,373 16.9,370.8 16.2,368.5 15.3,366.3 14.2,364 13.3,361.8 12.7,359.5 12.5,357.3 12.8,355.1 13.5,352.8 14.4,350.6 15.5,348.3 16.4,346.1 16.9,343.8 17.1,341.6 16.8,339.3 16.1,337.1 15.1,334.9 14.1,332.6 13.2,330.4 12.6,328.1 12.5,325.9 12.9,323.6 13.6,321.4 14.6,319.2 15.6,316.9 16.5,314.7 17,312.4 17.1,310.2 16.7,307.9 15.9,305.7 14.9,303.5 13.9,301.2 13,299 12.6,296.7 12.5,294.5 13,292.2 13.8,290 14.8,287.8 15.8,285.5 16.6,283.3 17.1,281 17,278.8 16.6,276.5 15.7,274.3 14.7,272 13.7,269.8 12.9,267.6 12.5,265.3 12.6,263.1 13.1,260.8 14,258.6 15,256.3 16,254.1 16.7,251.9 17.1,249.6 17,247.4 16.4,245.1 15.5,242.9 14.5,240.6 13.5,238.4 12.8,236.2 12.5,233.9 12.7,231.7 13.2,229.4 14.1,227.2 15.2,224.9 16.1,222.7 16.8,220.4 17.1,218.2 16.9,216 16.3,213.7 15.4,211.5 14.3,209.2 13.4,207 12.7,204.7 12.5,202.5 12.7,200.3 13.4,198 14.3,195.8 15.4,193.5 16.3,191.3 16.9,189 17.1,186.8 16.8,184.6 16.1,182.3 15.2,180.1 14.1,177.8 13.2,175.6 12.7,173.3 12.5,171.1 12.8,168.8 13.5,166.6 14.5,164.4 15.5,162.1 16.4,159.9 17,157.6 17.1,155.4 16.7,153.1 16,150.9 15,148.7 14,146.4 13.1,144.2 12.6,141.9 12.5,139.7 12.9,137.4 13.7,135.2 14.7,133 15.7,130.7 16.6,128.5 17,126.2 17.1,124 16.6,121.7 15.8,119.5 14.8,117.2 13.8,115 13,112.8 12.5,110.5 12.6,108.3 13,106 13.9,103.8 14.9,101.5 15.9,99.3 16.7,97.1 17.1,94.8 17,92.6 16.5,90.3 15.6,88.1 14.6,85.8 13.6,83.6 12.9,81.4 12.5,79.1 12.6,76.9 13.2,74.6 14.1,72.4 15.1,70.1 16.1,67.9 16.8,65.7 17.1,63.4 16.9,61.2 16.4,58.9 15.5,56.7 14.4,54.4 13.5,52.2 12.8,49.9 12.5,47.7 12.7,45.5 13.3,43.2 14.2,41 15.3,38.7 16.2,36.5 16.9,34.2 17.1,32Z" fill="#e5e5e5"/>
<path d="M15.8,15.8 25,20.4 27.2,20.2 29.5,19.6 31.7,18.8 34,17.8 36.2,16.9 38.5,16.2 40.7,15.8 43,15.9 45.2,16.3 47.5,17 49.7,17.9 52,18.9 54.2,19.7 56.5,20.2 58.7,20.4 61,20.1 63.2,19.5 65.5,18.7 67.7,17.7 70,16.8 72.2,16.1 74.5,15.8 76.7,15.9 79,16.4 81.2,17.2 83.5,18.2 85.7,19.2 87.9,19.9 90.2,20.4 92.4,20.3 94.7,19.9 96.9,19.1 99.2,18.1 101.4,17.1 103.7,16.3 105.9,15.9 108.2,15.8 110.4,16.2 112.7,16.9 114.9,17.9 117.2,18.9 119.4,19.7 121.7,20.3 123.9,20.4 126.2,20.1 128.4,19.4 130.7,18.5 132.9,17.5 135.2,16.6 137.4,16 139.7,15.8 141.9,16 144.2,16.6 146.4,17.5 148.7,18.5 150.9,19.4 153.2,20.1 155.4,20.4 157.7,20.2 159.9,19.7 162.2,18.8 164.4,17.8 166.7,16.9 168.9,16.2 171.2,15.8 173.4,15.9 175.7,16.4 177.9,17.2 180.2,18.2 182.4,19.2 184.7,19.9 186.9,20.4 189.2,20.3 191.4,19.9 193.7,19.1 195.9,18.1 198.2,17.1 200.4,16.3 202.7,15.9 204.9,15.8 207.1,16.2 209.4,17 211.6,17.9 213.9,18.9 216.1,19.7 218.4,20.3 220.6,20.4 222.9,20.1 225.1,19.4 227.4,18.5 229.6,17.5 231.9,16.6 234.1,16 236.4,15.8 238.6,16.1 240.9,16.9 243.1,18 245.4,19.1 247.6,20 249.9,20.4 252.1,20.2 254.4,19.6 256.6,18.5 258.9,17.4 261.1,16.4 263.4,15.9 265.6,15.9 267.9,16.4 270.1,17.4 272.4,18.5 274.6,19.6 276.9,20.2 279.1,20.4 281.4,20 283.6,19.1 285.9,18 288.1,16.9 290.4,16.1 292.6,15.8 294.9,16 297.1,16.6 299.4,17.5 301.6,18.5 303.9,19.4 306.1,20.1 308.4,20.4 310.6,20.3 312.9,19.7 315.1,18.9 317.4,17.9 319.6,17 321.9,16.2 324.1,15.8 326.3,15.9 328.6,16.3 330.8,17.1 333.1,18.1 335.3,19.1 337.6,19.9 339.8,20.3 342.1,20.4 344.3,19.9 346.6,19.2 348.8,18.2 351.1,17.2 353.3,16.4 355.6,15.9 357.8,15.8 360.1,16.2 362.3,16.9 364.6,17.8 366.8,18.8 369.1,19.7 371.3,20.2 373.6,20.4 375.8,20.1 378.1,19.4 380.3,18.5 382.6,17.5 384.8,16.6 387.1,16 389.3,15.8 391.6,16 393.8,16.6 396.1,17.5 398.3,18.5 400.6,19.4 402.8,20.1 405.1,20.4 407.3,20.3 409.6,19.7 411.8,18.9 414.1,17.9 416.3,16.9 418.6,16.2 420.8,15.8 423.1,15.9 425.3,16.3 427.6,17.1 429.8,18.1 432.1,19.1 434.3,19.9 436.6,20.3 438.8,20.4 441.1,19.9 443.3,19.2 445.5,18.2 447.8,17.2 450,16.4 452.3,15.9 454.5,15.8 456.8,16.1 459,16.8 461.3,17.7 463.5,18.7 465.8,19.5 468,20.1 470.3,20.4 472.5,20.2 474.8,19.7 477,18.9 479.3,17.9 481.5,17 483.8,16.3 486,15.9 488.3,15.8 490.5,16.2 492.8,16.9 495,17.8 497.3,18.8 499.5,19.6 501.8,20.2 504,20.4 513.2,15.8 508.6,32 508.8,34.2 509.5,36.5 510.4,38.7 511.5,41 512.4,43.2 513,45.5 513.2,47.7 512.9,49.9 512.2,52.2 511.3,54.4 510.2,56.7 509.3,58.9 508.8,61.2 508.6,63.4 508.9,65.7 509.6,67.9 510.6,70.1 511.6,72.4 512.5,74.6 513.1,76.9 513.2,79.1 512.8,81.4 512.1,83.6 511.1,85.8 510.1,88.1 509.2,90.3 508.7,92.6 508.6,94.8 509,97.1 509.8,99.3 510.8,101.5 511.8,103.8 512.7,106 513.1,108.3 513.2,110.5 512.7,112.8 511.9,115 510.9,117.2 509.9,119.5 509.1,121.7 508.6,124 508.7,126.2 509.1,128.5 510,130.7 511,133 512,135.2 512.8,137.4 513.2,139.7 513.1,141.9 512.6,144.2 511.7,146.4 510.7,148.7 509.7,150.9 509,153.1 508.6,155.4 508.7,157.6 509.3,159.9 510.2,162.1 511.2,164.4 512.2,166.6 512.9,168.8 513.2,171.1 513,173.3 512.5,175.6 511.6,177.8 510.5,180.1 509.6,182.3 508.9,184.6 508.6,186.8 508.8,189 509.4,191.3 510.3,193.5 511.4,195.8 512.3,198 513,200.3 513.2,202.5 513,204.7 512.3,207 511.4,209.2 510.3,211.5 509.4,213.7 508.8,216 508.6,218.2 508.9,220.4 509.6,222.7 510.5,224.9 511.6,227.2 512.5,229.4 513,231.7 513.2,233.9 512.9,236.2 512.2,238.4 511.2,240.6 510.2,242.9 509.3,245.1 508.7,247.4 508.6,249.6 509,251.9 509.7,254.1 510.7,256.3 511.7,258.6 512.6,260.8 513.1,263.1 513.2,265.3 512.8,267.6 512,269.8 511,272 510,274.3 509.1,276.5 508.7,278.8 508.6,281 509.1,283.3 509.9,285.5 510.9,287.8 511.9,290 512.7,292.2 513.2,294.5 513.1,296.7 512.7,299 511.8,301.2 510.8,303.5 509.8,305.7 509,307.9 508.6,310.2 508.7,312.4 509.2,314.7 510.1,316.9 511.1,319.2 512.1,321.4 512.8,323.6 513.2,325.9 513.1,328.1 512.5,330.4 511.6,332.6 510.6,334.9 509.6,337.1 508.9,339.3 508.6,341.6 508.8,343.8 509.3,346.1 510.2,348.3 511.3,350.6 512.2,352.8 512.9,355.1 513.2,357.3 513,359.5 512.4,361.8 511.5,364 510.4,366.3 509.5,368.5 508.8,370.8 508.6,373 513.2,389.2 504,384.6 501.8,384.8 499.5,385.4 497.3,386.2 495,387.2 492.8,388.1 490.5,388.8 488.3,389.2 486,389.1 483.8,388.7 481.5,388 479.3,387.1 477,386.1 474.8,385.3 472.5,384.8 470.3,384.6 468,384.9 465.8,385.5 463.5,386.3 461.3,387.3 459,388.2 456.8,388.9 454.5,389.2 452.3,389.1 450,388.6 447.8,387.8 445.5,386.8 443.3,385.8 441.1,385.1 438.8,384.6 436.6,384.7 434.3,385.1 432.1,385.9 429.8,386.9 427.6,387.9 425.3,388.7 423.1,389.1 420.8,389.2 418.6,388.8 416.3,388.1 414.1,387.1 411.8,386.1 409.6,385.3 407.3,384.7 405.1,384.6 402.8,384.9 400.6,385.6 398.3,386.5 396.1,387.5 393.8,388.4 391.6,389 389.3,389.2 387.1,389 384.8,388.4 382.6,387.5 380.3,386.5 378.1,385.6 375.8,384.9 373.6,384.6 371.3,384.8 369.1,385.3 366.8,386.2 364.6,387.2 362.3,388.1 360.1,388.8 357.8,389.2 355.6,389.1 353.3,388.6 351.1,387.8 348.8,386.8 346.6,385.8 344.3,385.1 342.1,384.6 339.8,384.7 337.6,385.1 335.3,385.9 333.1,386.9 330.8,387.9 328.6,388.7 326.3,389.1 324.1,389.2 321.9,388.8 319.6,388 317.4,387.1 315.1,386.1 312.9,385.3 310.6,384.7 308.4,384.6 306.1,384.9 303.9,385.6 301.6,386.5 299.4,387.5 297.1,388.4 294.9,389 292.6,389.2 290.4,388.9 288.1,388.1 285.9,387 283.6,385.9 281.4,385 279.1,384.6 276.9,384.8 274.6,385.4 272.4,386.5 270.1,387.6 267.9,388.6 265.6,389.1 263.4,389.1 261.1,388.6 258.9,387.6 256.6,386.5 254.4,385.4 252.1,384.8 249.9,384.6 247.6,385 245.4,385.9 243.1,387 240.9,388.1 238.6,388.9 236.4,389.2 234.1,389 231.9,388.4 229.6,387.5 227.4,386.5 225.1,385.6 222.9,384.9 220.6,384.6 218.4,384.7 216.1,385.3 213.9,386.1 211.6,387.1 209.4,388 207.1,388.8 204.9,389.2 202.7,389.1 200.4,388.7 198.2,387.9 195.9,386.9 193.7,385.9 191.4,385.1 189.2,384.7 186.9,384.6 184.7,385.1 182.4,385.8 180.2,386.8 177.9,387.8 175.7,388.6 173.4,389.1 171.2,389.2 168.9,388.8 166.7,388.1 164.4,387.2 162.2,386.2 159.9,385.3 157.7,384.8 155.4,384.6 153.2,384.9 150.9,385.6 148.7,386.5 146.4,387.5 144.2,388.4 141.9,389 139.7,389.2 137.4,389 135.2,388.4 132.9,387.5 130.7,386.5 128.4,385.6 126.2,384.9 123.9,384.6 121.7,384.7 119.4,385.3 117.2,386.1 114.9,387.1 112.7,388.1 110.4,388.8 108.2,389.2 105.9,389.1 103.7,388.7 101.4,387.9 99.2,386.9 96.9,385.9 94.7,385.1 92.4,384.7 90.2,384.6 87.9,385.1 85.7,385.8 83.5,386.8 81.2,387.8 79,388.6 76.7,389.1 74.5,389.2 72.2,388.9 70,388.2 67.7,387.3 65.5,386.3 63.2,385.5 61,384.9 58.7,384.6 56.5,384.8 54.2,385.3 52,386.1 49.7,387.1 47.5,388 45.2,388.7 43,389.1 40.7,389.2 38.5,388.8 36.2,388.1 34,387.2 31.7,386.2 29.5,385.4 27.2,384.8 25,384.6 15.8,389.2 20.4,373 20.2,370.8 19.5,368.5 18.6,366.3 17.5,364 16.6,361.8 16,359.5 15.8,357.3 16.1,355.1 16.8,352.8 17.7,350.6 18.8,348.3 19.7,346.1 20.2,343.8 20.4,341.6 20.1,339.3 19.4,337.1 18.4,334.9 17.4,332.6 16.5,330.4 15.9,328.1 15.8,325.9 16.2,323.6 16.9,321.4 17.9,319.2 18.9,316.9 19.8,314.7 20.3,312.4 20.4,310.2 20,307.9 19.2,305.7 18.2,303.5 17.2,301.2 16.3,299 15.9,296.7 15.8,294.5 16.3,292.2 17.1,290 18.1,287.8 19.1,285.5 19.9,283.3 20.4,281 20.3,278.8 19.9,276.5 19,274.3 18,272 17,269.8 16.2,267.6 15.8,265.3 15.9,263.1 16.4,260.8 17.3,258.6 18.3,256.3 19.3,254.1 20,251.9 20.4,249.6 20.3,247.4 19.7,245.1 18.8,242.9 17.8,240.6 16.8,238.4 16.1,236.2 15.8,233.9 16,231.7 16.5,229.4 17.4,227.2 18.5,224.9 19.4,222.7 20.1,220.4 20.4,218.2 20.2,216 19.6,213.7 18.7,211.5 17.6,209.2 16.7,207 16,204.7 15.8,202.5 16,200.3 16.7,198 17.6,195.8 18.7,193.5 19.6,191.3 20.2,189 20.4,186.8 20.1,184.6 19.4,182.3 18.5,180.1 17.4,177.8 16.5,175.6 16,173.3 15.8,171.1 16.1,168.8 16.8,166.6 17.8,164.4 18.8,162.1 19.7,159.9 20.3,157.6 20.4,155.4 20,153.1 19.3,150.9 18.3,148.7 17.3,146.4 16.4,144.2 15.9,141.9 15.8,139.7 16.2,137.4 17,135.2 18,133 19,130.7 19.9,128.5 20.3,126.2 20.4,124 19.9,121.7 19.1,119.5 18.1,117.2 17.1,115 16.3,112.8 15.8,110.5 15.9,108.3 16.3,106 17.2,103.8 18.2,101.5 19.2,99.3 20,97.1 20.4,94.8 20.3,92.6 19.8,90.3 18.9,88.1 17.9,85.8 16.9,83.6 16.2,81.4 15.8,79.1 15.9,76.9 16.5,74.6 17.4,72.4 18.4,70.1 19.4,67.9 20.1,65.7 20.4,63.4 20.2,61.2 19.7,58.9 18.8,56.7 17.7,54.4 16.8,52.2 16.1,49.9 15.8,47.7 16,45.5 16.6,43.2 17.5,41 18.6,38.7 19.5,36.5 20.2,34.2 20.4,32Z" fill="none" stroke="#eeeeee" stroke-width="1.200"/>
<rect x="38" y="38" width="451" height="329" fill="#e2e2e2"/>
<use href="#fl" transform="translate(264.5 11)"/>
<use href="#fl" transform="translate(264.5 394) scale(1 -1)"/>
<use href="#td" transform="translate(292.7 11)"/>
<use href="#td" transform="translate(292.7 394) scale(1 -1)"/>
<use href="#td" transform="translate(236.3 11)"/>
<use href="#td" transform="translate(236.3 394) scale(1 -1)"/>
<use href="#fl" transform="translate(325 11)"/>
<use href="#fl" transform="translate(325 394) scale(1 -1)"/>
<use href="#fl" transform="translate(204 11)"/>
<use href="#fl" transform="translate(204 394) scale(1 -1)"/>
<use href="#td" transform="translate(357.1 11)"/>
<use href="#td" transform="translate(357.1 394) scale(1 -1)"/>
<use href="#td" transform="translate(171.9 11)"/>
<use href="#td" transform="translate(171.9 394) scale(1 -1)"/>
<use href="#fl" transform="translate(389.3 11)"/>
<use href="#fl" transform="translate(389.3 394) scale(1 -1)"/>
<use href="#fl" transform="translate(139.7 11)"/>
<use href="#fl" transform="translate(139.7 394) scale(1 -1)"/>
<use href="#td" transform="translate(421.7 11)"/>
<use href="#td" transform="translate(421.7 394) scale(1 -1)"/>
<use href="#td" transform="translate(107.3 11)"/>
<use href="#td" transform="translate(107.3 394) scale(1 -1)"/>
<use href="#fl" transform="translate(453.9 11)"/>
<use href="#fl" transform="translate(453.9 394) scale(1 -1)"/>
<use href="#fl" transform="translate(75.2 11)"/>
<use href="#fl" transform="translate(75.2 394) scale(1 -1)"/>
<use href="#fl" transform="translate(11 202.5) rotate(-90)"/>
<use href="#fl" transform="translate(518 202.5) rotate(90)"/>
<use href="#td" transform="translate(11 233.5) rotate(-90)"/>
<use href="#td" transform="translate(518 233.5) rotate(90)"/>
<use href="#td" transform="translate(11 171.5) rotate(-90)"/>
<use href="#td" transform="translate(518 171.5) rotate(90)"/>
<use href="#fl" transform="translate(11 264.5) rotate(-90)"/>
<use href="#fl" transform="translate(518 264.5) rotate(90)"/>
<use href="#fl" transform="translate(11 140.5) rotate(-90)"/>
<use href="#fl" transform="translate(518 140.5) rotate(90)"/>
<use href="#td" transform="translate(11 295.5) rotate(-90)"/>
<use href="#td" transform="translate(518 295.5) rotate(90)"/>
<use href="#td" transform="translate(11 109.5) rotate(-90)"/>
<use href="#td" transform="translate(518 109.5) rotate(90)"/>
<use href="#fl" transform="translate(11 326.5) rotate(-90)"/>
<use href="#fl" transform="translate(518 326.5) rotate(90)"/>
<use href="#fl" transform="translate(11 78.5) rotate(-90)"/>
<use href="#fl" transform="translate(518 78.5) rotate(90)"/>
<g transform="translate(11 11) scale(1 1)">
<path d="M8,46V26C8,14 14,8 26,8H46V46Z" fill="#d3d3d3" stroke="#eaeaea" stroke-width=".9"/><path d="M8,46V26C8,14 14,8 26,8H46V46Z" fill="url(#hat)" opacity=".5"/>
<path d="M31,9C35,14 36,19 35,24L33,34C27,33 20,33 11,36C8,34 8,30 11,28C17,25 24,26 27,25C27,19 28,14 31,9Z" fill="#e8e8e8" stroke="#f1f1f1" stroke-width="1.200"/>
<path d="M31,14C33,18 33,22 31.500,27C30,22 30,18 31,14ZM13,32C17,29.500 22,29.500 27,31C22,32.500 17,33.500 13,32Z" fill="#d4d4d4" stroke="#ededed" stroke-width=".6"/>
<path d="M44,36C36,34 30,40 34,45C37,48 42,45 40,42" fill="none" stroke="#efefef" stroke-width="6.500" stroke-linecap="round"/>
<path d="M44,36C36,34 30,40 34,45C37,48 42,45 40,42" fill="none" stroke="#dcdcdc" stroke-width="4.500" stroke-linecap="round"/>
</g>
<g transform="translate(518 11) scale(-1 1)">
<path d="M8,46V26C8,14 14,8 26,8H46V46Z" fill="#d3d3d3" stroke="#eaeaea" stroke-width=".9"/><path d="M8,46V26C8,14 14,8 26,8H46V46Z" fill="url(#hat)" opacity=".5"/>
<path d="M31,9C35,14 36,19 35,24L33,34C27,33 20,33 11,36C8,34 8,30 11,28C17,25 24,26 27,25C27,19 28,14 31,9Z" fill="#e8e8e8" stroke="#f1f1f1" stroke-width="1.200"/>
<path d="M31,14C33,18 33,22 31.500,27C30,22 30,18 31,14ZM13,32C17,29.500 22,29.500 27,31C22,32.500 17,33.500 13,32Z" fill="#d4d4d4" stroke="#ededed" stroke-width=".6"/>
<path d="M44,36C36,34 30,40 34,45C37,48 42,45 40,42" fill="none" stroke="#efefef" stroke-width="6.500" stroke-linecap="round"/>
<path d="M44,36C36,34 30,40 34,45C37,48 42,45 40,42" fill="none" stroke="#dcdcdc" stroke-width="4.500" stroke-linecap="round"/>
</g>
<g transform="translate(11 394) scale(1 -1)">
<path d="M8,46V26C8,14 14,8 26,8H46V46Z" fill="#d3d3d3" stroke="#eaeaea" stroke-width=".9"/><path d="M8,46V26C8,14 14,8 26,8H46V46Z" fill="url(#hat)" opacity=".5"/>
<path d="M31,9C35,14 36,19 35,24L33,34C27,33 20,33 11,36C8,34 8,30 11,28C17,25 24,26 27,25C27,19 28,14 31,9Z" fill="#e8e8e8" stroke="#f1f1f1" stroke-width="1.200"/>
<path d="M31,14C33,18 33,22 31.500,27C30,22 30,18 31,14ZM13,32C17,29.500 22,29.500 27,31C22,32.500 17,33.500 13,32Z" fill="#d4d4d4" stroke="#ededed" stroke-width=".6"/>
<path d="M44,36C36,34 30,40 34,45C37,48 42,45 40,42" fill="none" stroke="#efefef" stroke-width="6.500" stroke-linecap="round"/>
<path d="M44,36C36,34 30,40 34,45C37,48 42,45 40,42" fill="none" stroke="#dcdcdc" stroke-width="4.500" stroke-linecap="round"/>
</g>
<g transform="translate(518 394) scale(-1 -1)">
<path d="M8,46V26C8,14 14,8 26,8H46V46Z" fill="#d3d3d3" stroke="#eaeaea" stroke-width=".9"/><path d="M8,46V26C8,14 14,8 26,8H46V46Z" fill="url(#hat)" opacity=".5"/>
<path d="M31,9C35,14 36,19 35,24L33,34C27,33 20,33 11,36C8,34 8,30 11,28C17,25 24,26 27,25C27,19 28,14 31,9Z" fill="#e8e8e8" stroke="#f1f1f1" stroke-width="1.200"/>
<path d="M31,14C33,18 33,22 31.500,27C30,22 30,18 31,14ZM13,32C17,29.500 22,29.500 27,31C22,32.500 17,33.500 13,32Z" fill="#d4d4d4" stroke="#ededed" stroke-width=".6"/>
<path d="M44,36C36,34 30,40 34,45C37,48 42,45 40,42" fill="none" stroke="#efefef" stroke-width="6.500" stroke-linecap="round"/>
<path d="M44,36C36,34 30,40 34,45C37,48 42,45 40,42" fill="none" stroke="#dcdcdc" stroke-width="4.500" stroke-linecap="round"/>
</g>
<rect x="58.7" y="58.7" width="412" height="288.2" fill="none" stroke="#c7c7c7" stroke-width="6.4"/>
<path d="M58.7,58.7L470.7,58.7" stroke="#e4e4e4" stroke-width="4.3" stroke-linecap="round" stroke-dasharray="0 6.242" fill="none"/>
<path d="M58.7,346.9L470.7,346.9" stroke="#e4e4e4" stroke-width="4.3" stroke-linecap="round" stroke-dasharray="0 6.242" fill="none"/>
<path d="M58.7,58.7L58.7,346.9" stroke="#e4e4e4" stroke-width="4.3" stroke-linecap="round" stroke-dasharray="0 6.265" fill="none"/>
<path d="M470.7,58.7L470.7,346.9" stroke="#e4e4e4" stroke-width="4.3" stroke-linecap="round" stroke-dasharray="0 6.265" fill="none"/>
<rect x="62" y="62" width="405.5" height="281.5" fill="url(#pk)"/>
<rect x="62" y="62" width="405.5" height="281.5" fill="url(#wv2)"/>
<rect x="62" y="62" width="405.5" height="281.5" fill="url(#wv1)"/>
<g transform="translate(263 203)" fill="none" stroke="url(#rayfade)" stroke-width="2.200"><path id="ray" d="M0,10q5,12 0,24t0,24t0,24t0,24t0,24"/><use href="#ray" transform="rotate(12)"/><use href="#ray" transform="rotate(24)"/><use href="#ray" transform="rotate(36)"/><use href="#ray" transform="rotate(48)"/><use href="#ray" transform="rotate(60)"/><use href="#ray" transform="rotate(72)"/><use href="#ray" transform="rotate(84)"/><use href="#ray" transform="rotate(96)"/><use href="#ray" transform="rotate(108)"/><use href="#ray" transform="rotate(120)"/><use href="#ray" transform="rotate(132)"/><use href="#ray" transform="rotate(144)"/><use href="#ray" transform="rotate(156)"/><use href="#ray" transform="rotate(168)"/><use href="#ray" transform="rotate(180)"/><use href="#ray" transform="rotate(192)"/><use href="#ray" transform="rotate(204)"/><use href="#ray" transform="rotate(216)"/><use href="#ray" transform="rotate(228)"/><use href="#ray" transform="rotate(240)"/><use href="#ray" transform="rotate(252)"/><use href="#ray" transform="rotate(264)"/><use href="#ray" transform="rotate(276)"/><use href="#ray" transform="rotate(288)"/><use href="#ray" transform="rotate(300)"/><use href="#ray" transform="rotate(312)"/><use href="#ray" transform="rotate(324)"/><use href="#ray" transform="rotate(336)"/><use href="#ray" transform="rotate(348)"/></g>
<rect x="62" y="62" width="405.5" height="281.5" fill="none" stroke="#d9e3df" stroke-width=".8"/>
<!--CT0-->
<path id="arc" d="M90,146.500A390,390 0 0 1 436,146.500" fill="none"/>
<text font-family="'Liberation Serif',serif" font-weight="bold" font-size="40" fill="#000" stroke="#000" stroke-width="1" stroke-linejoin="round"><textPath href="#arc" startOffset="0" textLength="360" lengthAdjust="spacingAndGlyphs"><tspan font-size="46">C</tspan>ertificate of <tspan font-size="46">C</tspan>ompletion</textPath></text>
<g font-family="'Liberation Sans',sans-serif" fill="#000" stroke="#000" stroke-width=".22">
<text x="263" y="148.300" font-size="6.500" font-weight="bold" text-anchor="middle" textLength="62" lengthAdjust="spacingAndGlyphs">This is to certify that</text>
<rect x="206" y="172" width="110" height="9.500" fill="#fff" stroke="none" opacity=".45" filter="url(#bl2)"/>
<rect x="111" y="182" width="300.500" height="1" fill="#000" stroke="none"/>
<text x="261.200" y="195.800" font-size="6.500" font-weight="bold" text-anchor="middle" textLength="43.700" lengthAdjust="spacingAndGlyphs">has completed</text>
<text x="169.300" y="217.700" font-size="9.600" textLength="182.300" lengthAdjust="spacingAndGlyphs">GHS and OSHA Hazardous Communication</text>
<text x="122.400" y="289.800" font-size="7" font-weight="bold" textLength="51" lengthAdjust="spacingAndGlyphs">Completion Date</text>
<text x="179" y="289" font-size="6.600" textLength="33" lengthAdjust="spacingAndGlyphs" stroke="#000" stroke-width=".2">09/30/2017</text>
<text x="122.400" y="305" font-size="7" font-weight="bold" textLength="49.800" lengthAdjust="spacingAndGlyphs">Course Duration</text>
<text x="179" y="305" font-size="6.600" textLength="9" lengthAdjust="spacingAndGlyphs" stroke="#000" stroke-width=".2">1.0</text>
<text x="123.200" y="319.600" font-size="7" font-weight="bold" textLength="36.800" lengthAdjust="spacingAndGlyphs">Certificate #</text>
<text x="179" y="320.700" font-size="6.600" textLength="44" lengthAdjust="spacingAndGlyphs" stroke="#000" stroke-width=".2">000011982368</text>
<text x="131.800" y="339" font-size="5.200" font-weight="bold" textLength="286.700" lengthAdjust="spacingAndGlyphs" xml:space="preserve">360training.com  •  6801 N Capital of Texas Hwy  Suite 150  •  Austin, TX 78731  •  877.881.2235  •  www.360training.com</text>
</g>
<!-- signature -->
<rect x="322.800" y="291.300" width="129.800" height="1.100" fill="#333"/>
<path d="M354.8,272.8 C347.6,275.9 339.2,284.9 337.8,289.1 C337.5,291.7 343.4,291.5 351.7,289.8M355.9,282.3 L359.0,284.8M351.7,289.8 C357.3,288.8 365.7,290.9 365.4,293.7 C364.3,296.7 358.7,297.6 357.3,296.5M365.0,264.7 L371.5,288.1M365.0,264.7 C372.6,271.7 382.3,278.7 384.0,281.4 C382.3,282.8 375.4,283.5 370.1,286.2M371.2,288.7 C376.8,286.7 382.3,287.8 388.6,289.2M381.7,294.9 L410.5,265.4M410.5,265.4 C406.0,273.1 400.4,280.0 399.0,284.5 C400.4,282.3 403.5,282.8 404.9,287.0 C410.2,285.9 415.7,286.4 421.3,288.1 C426.9,289.2 432.4,288.4 435.9,288.9" fill="none" stroke="#161616" stroke-width=".75" stroke-linecap="round" stroke-linejoin="round"/>
<!-- 360 logo -->
<circle cx="332" cy="309" r="12.600" fill="#e4e4e4" stroke="#a3a3a3" stroke-width=".9"/>
<circle cx="332" cy="309" r="11" fill="#e2130e"/>
<g fill="#fff"><circle cx="332" cy="304.400" r="2.200"/><circle cx="332" cy="310.700" r="1.500"/><circle cx="332" cy="315.500" r="1.100"/><circle cx="327.400" cy="307.600" r="1.200"/><circle cx="336.600" cy="307.600" r="1.200"/></g>
<text x="349.700" y="313.300" font-family="'Liberation Sans',sans-serif" font-size="13.200" font-weight="bold" fill="#262626" stroke="#262626" stroke-width=".25" textLength="72.300" lengthAdjust="spacingAndGlyphs">360training</text>
<text x="423" y="313.300" font-family="'Liberation Sans',sans-serif" font-size="12.600" font-weight="bold" fill="#b4b4b4" stroke="#8e8e8e" stroke-width=".2" textLength="25.500" lengthAdjust="spacingAndGlyphs">.com</text>
<text x="449" y="308.600" font-family="'Liberation Sans',sans-serif" font-size="5" font-weight="bold" fill="#8e8e8e" textLength="7.500" lengthAdjust="spacingAndGlyphs">tm</text>
<!-- seal -->
<g transform="translate(81.600 323.200)">
<polygon points="31.6,0.0 28.5,2.2 31.2,4.9 27.8,6.7 30.1,9.8 26.4,10.9 28.2,14.3 24.4,14.9 25.6,18.6 21.7,18.6 22.3,22.3 18.6,21.7 18.6,25.6 14.9,24.4 14.3,28.2 10.9,26.4 9.8,30.1 6.7,27.8 4.9,31.2 2.2,28.5 0.0,31.6 -2.2,28.5 -4.9,31.2 -6.7,27.8 -9.8,30.1 -10.9,26.4 -14.3,28.2 -14.9,24.4 -18.6,25.6 -18.6,21.7 -22.3,22.3 -21.7,18.6 -25.6,18.6 -24.4,14.9 -28.2,14.3 -26.4,10.9 -30.1,9.8 -27.8,6.7 -31.2,4.9 -28.5,2.2 -31.6,0.0 -28.5,-2.2 -31.2,-4.9 -27.8,-6.7 -30.1,-9.8 -26.4,-10.9 -28.2,-14.3 -24.4,-14.9 -25.6,-18.6 -21.7,-18.6 -22.3,-22.3 -18.6,-21.7 -18.6,-25.6 -14.9,-24.4 -14.3,-28.2 -10.9,-26.4 -9.8,-30.1 -6.7,-27.8 -4.9,-31.2 -2.2,-28.5 -0.0,-31.6 2.2,-28.5 4.9,-31.2 6.7,-27.8 9.8,-30.1 10.9,-26.4 14.3,-28.2 14.9,-24.4 18.6,-25.6 18.6,-21.7 22.3,-22.3 21.7,-18.6 25.6,-18.6 24.4,-14.9 28.2,-14.3 26.4,-10.9 30.1,-9.8 27.8,-6.7 31.2,-4.9 28.5,-2.2" fill="url(#gold)"/>
<circle r="28.500" fill="url(#shine)"/>
</g>
<!--CT1-->
</svg>
</div>
    <div id="sb" class="abs"><div id="thumb" class="abs"></div>
      <svg class="abs" style="left:5px;top:7px" width="7" height="4" viewBox="0 0 9 5"><polygon points="0,5 4.500,0 9,5" fill="#505050"/></svg>
      <svg class="abs" style="left:5px;top:450px" width="7" height="4" viewBox="0 0 9 5"><polygon points="0,0 4.500,5 9,0" fill="#505050"/></svg>
    </div>
  </div>
</div>
</div>
</body>
</html>
